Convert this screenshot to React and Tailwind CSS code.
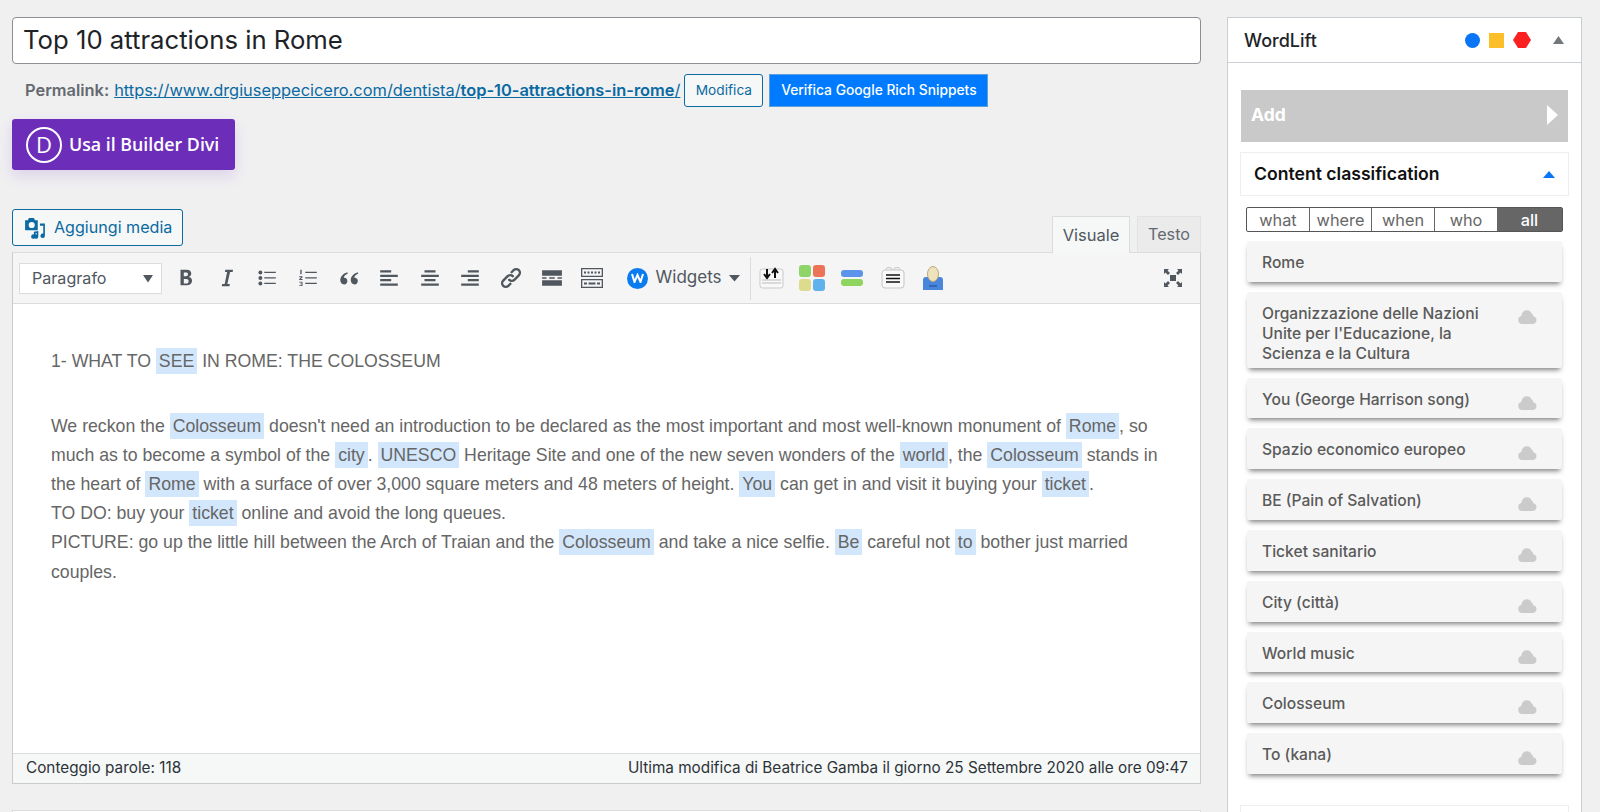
import React from "react";

const Hl = ({ children }) => <span className="bg-[#d3e7fc] px-[3px] py-[3px]">{children}</span>;

const Tb = ({ children }) => <div className="w-[40.6px] h-[31px] flex items-center justify-center shrink-0">{children}</div>;
const I = ({ children, w = 22, h = 22, vb = "0 0 20 20" }) => (
  <svg width={w} height={h} viewBox={vb} fill="#50575e">{children}</svg>
);

const items = [
  ["Rome", false],
  ["Organizzazione delle Nazioni Unite per l'Educazione, la Scienza e la Cultura", true],
  ["You (George Harrison song)", true],
  ["Spazio economico europeo", true],
  ["BE (Pain of Salvation)", true],
  ["Ticket sanitario", true],
  ["City (città)", true],
  ["World music", true],
  ["Colosseum", true],
  ["To (kana)", true],
];

const Cloud = () => (
  <svg width="19" height="15" viewBox="0 0 19 15" fill="#cbcbcb" className="shrink-0">
    <path d="M4 15a4 4 0 0 1-.6-7.900A5.500 5.500 0 0 1 9 1.200c2.200 0 3.700 1.200 4.400 3a3.400 3.400 0 0 1 1.900 3.100A3.900 3.900 0 0 1 15 15z" />
  </svg>
);

export default function App() {
  return (
    <div className="w-[1600px] h-[812px] overflow-hidden bg-[#f0f0f1] flex pt-[17px] pl-[12px] gap-[26px] font-['Inter',sans-serif]">
      {/* Left column */}
      <div className="w-[1189px] shrink-0 flex flex-col">
        <div className="h-[47px] shrink-0 bg-white border border-[#8c8f94] rounded-[4px] pl-[10px] flex items-center text-[25.7px] text-[#1d2327]">
          Top 10 attractions in Rome
        </div>
        <div className="mt-[10px] h-[33px] shrink-0 pl-[13px] flex items-center text-[16.4px]">
          <span className="font-semibold text-[#646970] mr-[5px]">Permalink:</span>
          <span className="text-[#0a6aa1] underline whitespace-nowrap">
            https://www.drgiuseppecicero.com/dentista/<span className="font-semibold">top-10-attractions-in-rome</span>/
          </span>
          <span className="ml-[4px] w-[79px] h-[33px] border border-[#0a6aa1] rounded-[3px] bg-[#f6f7f7] text-[#0a6aa1] text-[13.7px] flex items-center justify-center shrink-0">Modifica</span>
          <span className="ml-[6px] w-[219px] h-[33px] bg-[#007bff] border border-[#5d9fd8] text-white text-[13.8px] font-medium flex items-center justify-center shrink-0 whitespace-nowrap">Verifica Google Rich Snippets</span>
        </div>
        <div className="mt-[12px] w-[223px] h-[51px] shrink-0 rounded-[3px] bg-[#6c2eb9] shadow-[0_6px_14px_rgba(108,46,185,0.15)] flex items-center pl-[14px] text-white font-['Open_Sans',sans-serif] font-semibold text-[17.8px]">
          <span className="w-[36px] h-[36px] rounded-full border-2 border-white flex items-center justify-center text-[22px] font-normal shrink-0">D</span>
          <span className="ml-[7px] whitespace-nowrap">Usa il Builder Divi</span>
        </div>
        <div className="mt-[39px] h-[43px] shrink-0 flex justify-between relative">
          <div className="w-[171px] h-[37px] border border-[#0a6aa1] rounded-[3px] bg-[#f6f7f7] flex items-center pl-[11px] text-[#0a6aa1] text-[16.1px]">
            <svg width="22" height="22" viewBox="0 0 20 20" fill="#0a6aa1" className="shrink-0">
              <path d="M1 3h2.500l1-2h4.500l1 2h2.500v9H1zM7 4.500a2.800 2.800 0 1 0 0 5.600 2.800 2.800 0 0 0 0-5.600z" fillRule="evenodd" />
              <path d="M14.500 6H19v11a2 2 0 1 1-1.500-1.900V8h-3zM9 13.500l4-.8v5a2 2 0 1 1-1.500-1.900v-1.300l-1 .2v3a2 2 0 1 1-1.500-1.900z" />
            </svg>
            <span className="ml-[8px] whitespace-nowrap">Aggiungi media</span>
          </div>
          <div className="flex items-end">
            <div className="w-[78px] h-[37px] bg-[#f6f7f7] border border-[#dcdcde] border-b-0 flex items-center justify-center text-[16.5px] text-[#50575e] relative top-px">Visuale</div>
            <div className="ml-[7px] w-[64px] h-[36px] bg-[#ebebec] border border-[#e2e2e4] border-b-0 flex items-center justify-center text-[16.2px] text-[#646970]">Testo</div>
          </div>
        </div>
        {/* Editor */}
        <div className="h-[532px] shrink-0 border border-[#c9cbce] border-t-[#dcdcde] bg-white flex flex-col">
          <div className="h-[51px] shrink-0 bg-[#f5f5f6] border-b border-[#dcdcde] flex items-center pl-[6px] pr-[16px]">
            <div className="w-[143px] h-[31px] bg-white border border-[#dcdcde] flex items-center justify-between pl-[12px] pr-[7px] text-[16.1px] text-[#50575e] mr-[4px] shrink-0">
              Paragrafo
              <svg width="12" height="9" viewBox="0 0 12 9" fill="#50575e"><path d="M1 1h10L6 8.500z" /></svg>
            </div>
            <Tb><I><path d="M5 2.500h5.500c2.800 0 4.300 1.300 4.300 3.500 0 1.500-.8 2.500-2 2.900v.1c1.700.4 2.700 1.600 2.700 3.400 0 2.500-1.800 4.100-4.800 4.100H5zM8 5v3.500h1.800c1.300 0 2-.6 2-1.800S11.100 5 9.800 5zm0 5.800V15h2.200c1.400 0 2.200-.8 2.200-2.100s-.8-2.100-2.300-2.100z" /></I></Tb>
            <Tb><I><path d="M8.500 2.500h7l-.4 2h-2.300L10.300 15.500h2.300l-.4 2h-7l.4-2h2.300L10.100 4.500H8.100z" /></I></Tb>
            <Tb><I><circle cx="4" cy="5" r="1.800" /><circle cx="4" cy="10" r="1.800" /><circle cx="4" cy="15" r="1.800" /><path d="M7.500 4.300H18v1.200H7.500zm0 5H18v1.200H7.500zm0 5H18v1.200H7.500z" /></I></Tb>
            <Tb><I><path d="M7.500 4.300H18v1.200H7.500zm0 5H18v1.200H7.500zm0 5H18v1.200H7.500z" /><path d="M3 2.500h1.200v4.200H3zM2 8.500h3v1l-1.800 1.500H5v.8H2v-.8l1.800-1.600H2zM2 13.500h3v3.700H2v-.7h2.200v-.8H3v-.6h1.200v-.9H2z" /></I></Tb>
            <Tb><I><path d="M9 5C6.500 6 5.500 7.500 5.300 8.800c1.900-.3 3.200.9 3.200 2.900 0 1.800-1.100 3.100-2.900 3.100-2.100 0-3.500-1.600-3.500-4 0-3.100 2.400-5.600 6.200-7zm9.500 0C16 6 15 7.500 14.800 8.800c1.900-.3 3.200.9 3.200 2.900 0 1.800-1.100 3.100-2.900 3.100-2.100 0-3.500-1.600-3.500-4 0-3.100 2.400-5.600 6.200-7z" transform="translate(0 1)" /></I></Tb>
            <Tb><I><path d="M2 3h10v2H2zM2 7h16v2H2zM2 11h10v2H2zM2 15h16v2H2z" /></I></Tb>
            <Tb><I><path d="M5 3h10v2H5zM2 7h16v2H2zM5 11h10v2H5zM2 15h16v2H2z" /></I></Tb>
            <Tb><I><path d="M8 3h10v2H8zM2 7h16v2H2zM8 11h10v2H8zM2 15h16v2H2z" /></I></Tb>
            <Tb>
              <svg width="24" height="24" viewBox="0 0 20 20" fill="none" stroke="#50575e" strokeWidth="2" strokeLinecap="round">
                <path d="M8.500 11.500a3 3 0 0 0 4.300 0l3.700-3.700a3 3 0 0 0-4.300-4.300l-1.700 1.700" />
                <path d="M11.500 8.500a3 3 0 0 0-4.300 0l-3.700 3.700a3 3 0 0 0 4.300 4.300l1.700-1.700" />
              </svg>
            </Tb>
            <Tb><I><path d="M1 3h18v5H1zM1 12h18v5H1zM1 9.400h4v1.200H1zm6.500 0h5v1.200h-5zm7.500 0h4v1.200h-4z" /></I></Tb>
            <Tb>
              <svg width="24" height="22" viewBox="0 0 24 22" fill="#50575e">
                <path d="M1 1h22v9H1zm1.300 1.300v6.400h19.400V2.300zM1 12h22v9H1zm1.300 1.300v6.400h19.400v-6.400z" fillRule="evenodd" />
                <path d="M4 4.500h2v2H4zm3.500 0h2v2h-2zm3.500 0h2v2h-2zm3.500 0h2v2h-2zm3.500 0h2v2h-2zM4 15.500h3v2H4zm4.500 0h7v2h-7zm8.500 0h3v2h-3z" />
              </svg>
            </Tb>
            <div className="ml-[14px] w-[21px] h-[21px] rounded-full bg-[#0a7cf0] flex items-center justify-center shrink-0">
              <svg width="13" height="10" viewBox="0 0 13 10" fill="none" stroke="white" strokeWidth="2"><path d="M1 1l2.500 8L6.500 2l3 7L12 1" /></svg>
            </div>
            <span className="ml-[8px] text-[17px] text-[#50575e] whitespace-nowrap">Widgets</span>
            <svg width="11" height="8" viewBox="0 0 11 8" fill="#50575e" className="ml-[7px] shrink-0"><path d="M0 1h11L5.500 7.500z" /></svg>
            <div className="ml-[10px] w-px h-[43px] bg-[#dcdcde] shrink-0" />
            <div className="ml-[8px] w-[26px] h-[26px] flex items-center justify-center shrink-0">
              <svg width="25" height="24" viewBox="0 0 25 24">
                <rect x="1" y="3" width="23" height="19" rx="2.500" fill="#f8f8f8" stroke="#c9c9c9" />
                <path d="M8 3v8M5 8l3 4 3-4M16 12V4M13 7l3-4 3 4" stroke="#111" strokeWidth="2" fill="none" />
                <path d="M3 14h19M3 17h19" stroke="#bbb" />
              </svg>
            </div>
            <div className="ml-[14px] w-[26px] h-[26px] grid grid-cols-2 gap-[2px] shrink-0">
              <span className="bg-[#8fd466] rounded-[3px]" /><span className="bg-[#ec7358] rounded-[3px]" />
              <span className="bg-[#dcdc8c] rounded-[3px]" /><span className="bg-[#5fb2ec] rounded-[3px]" />
            </div>
            <div className="ml-[16px] w-[22px] flex flex-col gap-[2px] shrink-0">
              <span className="h-[7px] rounded-[3px] bg-[#5b94ea]" />
              <span className="h-[7px] rounded-[3px] bg-[#8ed660]" />
            </div>
            <div className="ml-[18px] w-[24px] shrink-0">
              <svg width="24" height="24" viewBox="0 0 24 24">
                <rect x="5" y="1.500" width="6" height="5" rx="2" fill="#eee" stroke="#ccc" />
                <rect x="13" y="1.500" width="6" height="5" rx="2" fill="#eee" stroke="#ccc" />
                <rect x="1" y="4" width="22" height="18" rx="3" fill="#f8f8f8" stroke="#c6c6c6" />
                <path d="M5 9h14M5 12.500h14M5 16h14" stroke="#111" strokeWidth="1.500" />
              </svg>
            </div>
            <div className="ml-[17px] w-[22px] shrink-0">
              <svg width="22" height="26" viewBox="0 0 22 26">
                <path d="M1 25V15c0-2 1-3 3-3h14c2 0 3 1 3 3v10z" fill="#4a85dc" />
                <path d="M7 21h8" stroke="#2a5cae" strokeWidth="1.500" />
                <ellipse cx="11" cy="9" rx="5.500" ry="7.500" fill="#efe3bd" stroke="#bba97a" />
              </svg>
            </div>
            <div className="ml-auto shrink-0">
              <svg width="22" height="22" viewBox="0 0 22 22" fill="#50575e">
                <path d="M8 8h6v6H8zM2 2h5L5.500 3.500 8 6 6 8 3.500 5.500 2 7zM20 2v5l-1.500-1.500L16 8l-2-2 2.500-2.500L15 2zM2 20v-5l1.500 1.500L6 14l2 2-2.500 2.500L7 20zM20 20h-5l1.500-1.500L14 16l2-2 2.500 2.500L20 15z" />
              </svg>
            </div>
          </div>
          <div className="flex-1 px-[38px] pt-[43px] font-['Liberation_Sans',sans-serif] text-[17.7px] leading-[29.1px] text-[#666] whitespace-nowrap">
            <p className="mb-[36px]">1- WHAT TO <Hl>SEE</Hl> IN ROME: THE COLOSSEUM</p>
            <p>We reckon the <Hl>Colosseum</Hl> doesn't need an introduction to be declared as the most important and most well-known monument of <Hl>Rome</Hl>, so</p>
            <p>much as to become a symbol of the <Hl>city</Hl>. <Hl>UNESCO</Hl> Heritage Site and one of the new seven wonders of the <Hl>world</Hl>, the <Hl>Colosseum</Hl> stands in</p>
            <p>the heart of <Hl>Rome</Hl> with a surface of over 3,000 square meters and 48 meters of height. <Hl>You</Hl> can get in and visit it buying your <Hl>ticket</Hl>.</p>
            <p>TO DO: buy your <Hl>ticket</Hl> online and avoid the long queues.</p>
            <p>PICTURE: go up the little hill between the Arch of Traian and the <Hl>Colosseum</Hl> and take a nice selfie. <Hl>Be</Hl> careful not <Hl>to</Hl> bother just married</p>
            <p>couples.</p>
          </div>
          <div className="h-[30px] shrink-0 bg-[#f6f7f7] border-t border-[#dcdcde] flex items-center justify-between pl-[13px] pr-[12px] text-[15.3px] text-[#2c3338]">
            <span>Conteggio parole: 118</span>
            <span>Ultima modifica di Beatrice Gamba il giorno 25 Settembre 2020 alle ore 09:47</span>
          </div>
        </div>
        <div className="mt-[26px] h-[10px] shrink-0 bg-white border border-[#dcdcde]" />
      </div>

      {/* Sidebar */}
      <div className="w-[355px] shrink-0 h-[840px] bg-white border border-[#c9ced3] flex flex-col">
        <div className="h-[45px] shrink-0 border-b border-[#ccd0d4] flex items-center pl-[16px] pr-[17px]">
          <span className="text-[18px] font-medium text-[#1d2327]">WordLift</span>
          <span className="ml-auto w-[15px] h-[15px] rounded-full bg-[#0a75f5]" />
          <span className="ml-[9px] w-[15px] h-[15px] bg-[#fcbf29]" />
          <svg width="18" height="16" viewBox="0 0 18 16" fill="#fb2121" className="ml-[9px]"><path d="M5 0h8l5 8-5 8H5L0 8z" /></svg>
          <svg width="11" height="8" viewBox="0 0 11 8" fill="#72777c" className="ml-[22px]"><path d="M5.500 0L11 8H0z" /></svg>
        </div>
        <div className="px-[13px] pt-[27px] flex flex-col flex-1">
          <div className="h-[52px] shrink-0 bg-[#c9c9c9] flex items-center justify-between pl-[10px] pr-[10px] pb-[2px] text-white text-[17.5px] font-bold">
            Add
            <svg width="11" height="20" viewBox="0 0 11 20" fill="white"><path d="M0 0l11 10L0 20z" /></svg>
          </div>
          <div className="mt-[10px] -mx-px h-[44px] shrink-0 bg-white border border-[#eeeeee] flex items-center justify-between pl-[13px] pr-[13px] text-[17.6px] font-semibold text-[#111] whitespace-nowrap">
            Content classification
            <svg width="12" height="7" viewBox="0 0 12 7" fill="#0a75f5"><path d="M6 0l6 7H0z" /></svg>
          </div>
          <div className="mt-[11px] mx-[5px] h-[25px] shrink-0 flex rounded-[2px] border border-[#555] text-[16.3px] text-[#666]">
            <span className="w-[63px] border-r border-[#666] flex items-center justify-center pt-px">what</span>
            <span className="w-[62px] border-r border-[#666] flex items-center justify-center pt-px">where</span>
            <span className="w-[63px] border-r border-[#666] flex items-center justify-center pt-px">when</span>
            <span className="w-[62px] flex items-center justify-center pt-px">who</span>
            <span className="flex-1 bg-[#666] text-white flex items-center justify-center font-medium pt-px">all</span>
          </div>
          <div className="mt-[9px] mx-[6px] flex flex-col gap-[10px] shrink-0">
            {items.map(([t, c]) => (
              <div key={t} className="min-h-[40.8px] bg-[#f5f5f5] rounded-[2px] shadow-[0_4px_5px_-2px_rgba(0,0,0,0.5)] flex items-start justify-between pl-[15px] pr-[25px] pt-[12px] pb-[3px] text-[15.6px] leading-[20.3px] font-medium text-[#5a5a5a]">
                <span className="w-[225px]">{t}</span>
                {c && <span className="mt-[5px]"><Cloud /></span>}
              </div>
            ))}
          </div>
          <div className="mt-[31px] -mx-px h-[30px] shrink-0 bg-white border border-[#eeeeee]" />
        </div>
      </div>
    </div>
  );
}
